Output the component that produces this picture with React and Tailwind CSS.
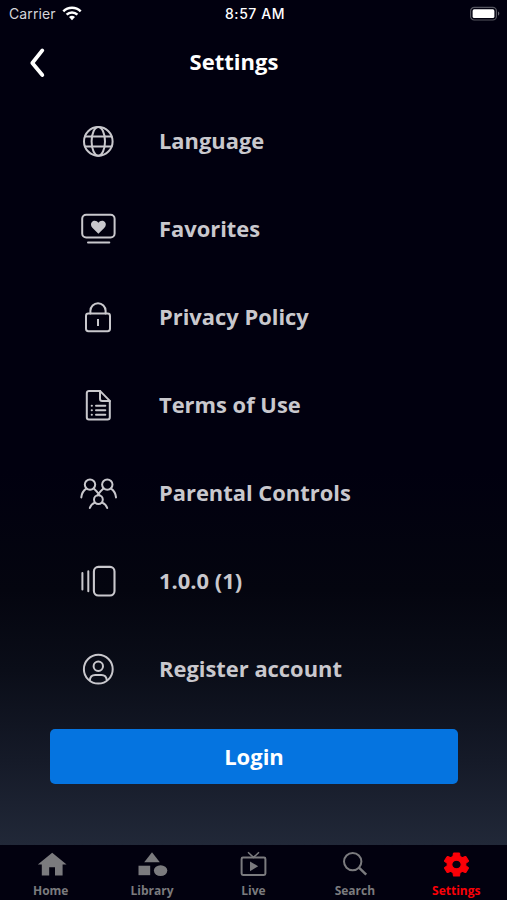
import { MdSettings } from 'react-icons/md'

function LineIcon({ children }) {
  return (
    <svg
      viewBox="0 0 40 40"
      className="h-10 w-10 shrink-0"
      fill="none"
      stroke="currentColor"
      strokeWidth="2"
      strokeLinecap="round"
      strokeLinejoin="round"
      aria-hidden="true"
    >
      {children}
    </svg>
  )
}

const menuItems = [
  {
    label: 'Language',
    icon: (
      <>
        <circle cx="20.3" cy="19.4" r="14.3" />
        <ellipse cx="20.3" cy="19.4" rx="6.7" ry="14.3" />
        <path d="M7 14.4h26.6M7 24.4h26.6" />
      </>
    ),
  },
  {
    label: 'Favorites',
    icon: (
      <>
        <rect x="4.2" y="4.7" width="32.4" height="22.8" rx="4" />
        <path d="M10 32.4h21.3" />
        <path
          d="M20.4 23.8l-5.8-5.8c-2-2-2.1-4.4-.7-6 1.8-2 5.1-1.5 6.5.8 1.4-2.3 4.7-2.8 6.5-.8 1.4 1.6 1.3 4-.7 6z"
          fill="currentColor"
          stroke="none"
        />
      </>
    ),
  },
  {
    label: 'Privacy Policy',
    icon: (
      <>
        <rect x="8" y="15.6" width="24" height="17.6" rx="2.4" />
        <path d="M12.4 15.4v-2.6a7.6 7.6 0 0 1 15.2 0v2.6" />
        <path d="M20 21v7" strokeLinecap="butt" />
      </>
    ),
  },
  {
    label: 'Terms of Use',
    icon: (
      <>
        <path d="M22 4.9H11a2.2 2.2 0 0 0-2.2 2.2v24.2a2.2 2.2 0 0 0 2.2 2.2h18.6a2.2 2.2 0 0 0 2.2-2.2V14.9z" />
        <path d="M22 4.9v7.8a2.2 2.2 0 0 0 2.2 2.2h7.6" />
        <path d="M18 19.8h9.3M18 24.2h9.3M18 28.7h9.3" />
        <path d="M13.7 19.8h.2M13.7 24.2h.2M13.7 28.7h.2" />
      </>
    ),
  },
  {
    label: 'Parental Controls',
    icon: (
      <>
        <circle cx="12" cy="10.6" r="5.2" />
        <circle cx="29.3" cy="10.6" r="5.2" />
        <circle cx="20.4" cy="25.6" r="4.4" />
        <path d="M3.3 23.4c.3-3.6 2-6.8 5-8.8M38 23.4c-.3-3.6-2-6.8-5-8.8" />
        <path d="M15.8 14.5c1.9 1.6 3.9 4 5.8 6.8M25.4 14.5c-1.9 1.6-4 4-5.9 6.8" />
        <path d="M11.8 34.1c.6-2.2 2.3-4.2 5-5.4M29.2 34.1c-.6-2.2-2.3-4.2-5-5.4" />
      </>
    ),
  },
  {
    label: '1.0.0 (1)',
    icon: (
      <>
        <path d="M4.4 11v16.4M10.3 9.2v20" />
        <rect x="15.9" y="4.9" width="20.6" height="28.6" rx="4.5" strokeWidth="2.1" />
      </>
    ),
  },
  {
    label: 'Register account',
    icon: (
      <>
        <circle cx="20.3" cy="19.2" r="14.4" />
        <circle cx="20.3" cy="16.2" r="4.7" />
        <path d="M11.8 30.2c.3-3.4 2.2-5.2 5.4-5.2h6.2c3.2 0 5.1 1.8 5.4 5.2" />
      </>
    ),
  },
]

const tabs = [
  {
    label: 'Home',
    icon: <path d="M19.2 2.7 4.8 14.4h4v11.1h7.4v-8.3H22v8.3h7.6V14.4h4z" fill="currentColor" />,
  },
  {
    label: 'Library',
    icon: (
      <g fill="currentColor">
        <path d="m18 2.2 7.8 10H10.2z" />
        <path d="M4.5 15.7h11.7v9.5H4.5z" />
        <ellipse cx="26.6" cy="20.6" rx="6.7" ry="5.4" />
      </g>
    ),
  },
  {
    label: 'Live',
    icon: (
      <g fill="none" stroke="currentColor" strokeWidth="2">
        <rect x="6.6" y="7.6" width="23.8" height="17.4" rx="1.4" />
        <path d="m13 2.2 5.5 5.2L24 2.2" strokeWidth="1.5" />
        <path d="M15 11.4v9.8l8.2-4.9z" fill="currentColor" stroke="none" />
      </g>
    ),
  },
  {
    label: 'Search',
    icon: (
      <g fill="none" stroke="currentColor" strokeWidth="2">
        <circle cx="15.7" cy="11.6" r="8.7" />
        <path d="m21.7 17.4 7.5 7.2" strokeWidth="2.5" />
      </g>
    ),
  },
  { label: 'Settings', active: true },
]

function StatusBar() {
  return (
    <div className="grid h-7 grid-cols-3 items-center pr-1.5 pl-[9px] font-[Inter,sans-serif] text-white">
      <div className="flex items-center gap-1.5 text-[#d5d5da]">
        <span className="pb-px text-[14px] tracking-[0.1px]">Carrier</span>
        <svg viewBox="0 0 20 16" className="mb-0.5 h-4 w-5" fill="none" stroke="#fff" strokeWidth="2.5">
          <path d="M1.3 6.3a12.3 12.3 0 0 1 17.4 0" />
          <path d="M4.6 9.7a7.7 7.7 0 0 1 10.8 0" />
          <path d="m10 15.2-3-3.1a4.3 4.3 0 0 1 6 0z" fill="#fff" stroke="none" />
        </svg>
      </div>
      <span className="pb-px text-center text-[14px] font-medium tracking-[0.55px] whitespace-nowrap">8:57 AM</span>
      <svg viewBox="0 0 32 16" className="h-4 w-8 justify-self-end">
        <rect x="1.6" y="1.4" width="25.8" height="12.6" rx="3.6" fill="none" stroke="#55555f" strokeWidth="1.2" />
        <rect x="3.6" y="3.3" width="21.8" height="8.8" rx="1.6" fill="#fff" />
        <path d="M29 5.6c1.8.7 1.8 3.5 0 4.2z" fill="#666670" />
      </svg>
    </div>
  )
}

function TabBar() {
  return (
    <nav className="grid h-[55px] grid-cols-5 bg-[#02010f]">
      {tabs.map((tab) => (
        <button
          key={tab.label}
          type="button"
          className={`flex flex-col items-center pt-[5px] ${tab.active ? 'text-[#fb0007]' : 'text-[#7b7b7e]'}`}
        >
          <span className="flex h-7 w-9 items-center justify-center">
            {tab.active ? (
              <MdSettings
                className="h-[29px] w-[31px] [&>path:last-child]:[stroke-width:0.8]"
                preserveAspectRatio="none"
              />
            ) : (
              <svg viewBox="0 0 36 28" className="h-7 w-9" aria-hidden="true">
                {tab.icon}
              </svg>
            )}
          </span>
          <span className="mt-[5px] text-[12px] leading-4 font-bold">{tab.label}</span>
        </button>
      ))}
    </nav>
  )
}

export default function App() {
  return (
    <div className="flex h-[900px] w-[507px] flex-col overflow-hidden bg-[linear-gradient(to_bottom,#01000f_0px,#01000f_470px,#04050f_590px,#0a0d18_670px,#151a28_760px,#212838_845px)] font-['Open_Sans',sans-serif]">
      <StatusBar />

      <header className="grid h-[70px] grid-cols-[1fr_auto_1fr] items-center pr-[39px]">
        <button type="button" aria-label="Back" className="ml-7 w-5">
          <svg viewBox="0 0 20 32" className="h-8 w-5" fill="none" stroke="#fff" strokeWidth="3.8">
            <path d="M14.3 3.4 4.3 16 14.3 28" strokeLinecap="round" strokeLinejoin="round" />
          </svg>
        </button>
        <h1 className="pb-[4px] text-[22px] leading-none font-bold text-white">Settings</h1>
      </header>

      <main className="flex-1">
        <ul>
          {menuItems.map((item) => (
            <li key={item.label} className="flex h-[88px] items-center gap-[41px] pl-[78px] text-[#c9c8cd]">
              <LineIcon>{item.icon}</LineIcon>
              <span className="pb-[3px] text-[21.9px] leading-none font-bold">{item.label}</span>
            </li>
          ))}
        </ul>
        <button
          type="button"
          className="mt-[15px] ml-[50px] h-[55px] w-[408px] rounded-[5px] bg-[#0574e0] text-[22px] font-bold text-white"
        >
          Login
        </button>
      </main>

      <TabBar />
    </div>
  )
}
